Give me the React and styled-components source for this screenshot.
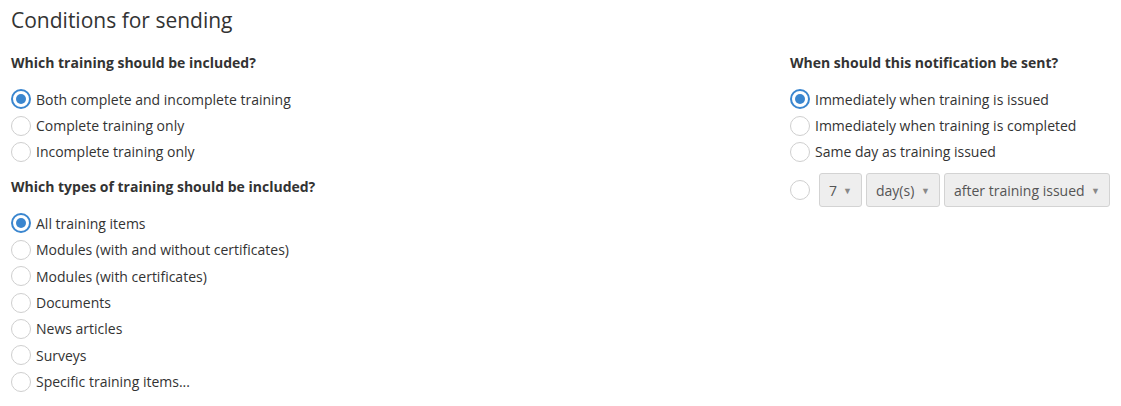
import React, { useState } from "react"
import styled, { createGlobalStyle } from "styled-components"

const GlobalStyle = createGlobalStyle`
  body {
    margin: 0;
    background: #fff;
    font-family: "Open Sans", "Noto Sans", sans-serif;
    color: #333;
  }
`

const Page = styled.div`
  padding: 6px 11px 0 11px;
`

const Title = styled.h2`
  margin: 0 0 19px;
  font-size: 21px;
  font-weight: 400;
  line-height: 28px;
  color: #333;
`

const Columns = styled.div`
  display: grid;
  grid-template-columns: 779px 1fr;
`

const Column = styled.div`
  display: flex;
  flex-direction: column;
`

const Question = styled.h4`
  margin: 0 0 13px;
  font-size: 14px;
  font-weight: 700;
  line-height: 20px;
  color: #333;
`

const Options = styled.div`
  display: flex;
  flex-direction: column;
  margin-bottom: ${(p) => p.$after}px;
`

const Option = styled.label`
  display: flex;
  align-items: center;
  gap: 5px;
  height: 26.4px;
  font-size: 14px;
  color: #333;
  cursor: pointer;
`

const Radio = styled.span`
  box-sizing: border-box;
  width: 20px;
  height: 20px;
  flex: none;
  border-radius: 50%;
  border: ${(p) => (p.$checked ? "2px solid #3a86cf" : "1px solid #cfcfcf")};
  background: #fff;
  display: flex;
  align-items: center;
  justify-content: center;
  cursor: pointer;
  &::after {
    content: "";
    display: ${(p) => (p.$checked ? "block" : "none")};
    width: 10px;
    height: 10px;
    border-radius: 50%;
    background: #3a86cf;
  }
`

const SelectRow = styled.div`
  display: flex;
  align-items: center;
`

const Selects = styled.div`
  display: flex;
  gap: 4px;
  margin-left: 9px;
`

const Select = styled.div`
  box-sizing: border-box;
  height: 34px;
  width: ${(p) => p.$width}px;
  padding: 0 9px;
  display: flex;
  align-items: center;
  justify-content: space-between;
  background: #eeeeee;
  border: 1px solid #d3d3d3;
  border-radius: 3px;
  font-size: 14px;
  color: #555;
`

const Caret = styled.span`
  font-size: 9px;
  color: #888;
`

const RadioGroup = ({ items, value, onChange, after }) => (
  <Options $after={after}>
    {items.map((item, i) => (
      <Option key={item} onClick={() => onChange(i)}>
        <Radio $checked={value === i} />
        {item}
      </Option>
    ))}
  </Options>
)

const App = () => {
  const [included, setIncluded] = useState(0)
  const [types, setTypes] = useState(0)
  const [when, setWhen] = useState(0)

  return (
    <Page>
      <GlobalStyle />
      <Title>Conditions for sending</Title>
      <Columns>
        <Column>
          <Question>Which training should be included?</Question>
          <RadioGroup
            items={[
              "Both complete and incomplete training",
              "Complete training only",
              "Incomplete training only",
            ]}
            value={included}
            onChange={setIncluded}
            after={12}
          />
          <Question>Which types of training should be included?</Question>
          <RadioGroup
            items={[
              "All training items",
              "Modules (with and without certificates)",
              "Modules (with certificates)",
              "Documents",
              "News articles",
              "Surveys",
              "Specific training items...",
            ]}
            value={types}
            onChange={setTypes}
            after={0}
          />
        </Column>
        <Column>
          <Question>When should this notification be sent?</Question>
          <RadioGroup
            items={[
              "Immediately when training is issued",
              "Immediately when training is completed",
              "Same day as training issued",
            ]}
            value={when}
            onChange={setWhen}
            after={8}
          />
          <SelectRow>
            <Radio $checked={when === 3} onClick={() => setWhen(3)} />
            <Selects>
              <Select $width={43}>
                7 <Caret>▼</Caret>
              </Select>
              <Select $width={74}>
                day(s) <Caret>▼</Caret>
              </Select>
              <Select $width={166}>
                after training issued <Caret>▼</Caret>
              </Select>
            </Selects>
          </SelectRow>
        </Column>
      </Columns>
    </Page>
  )
}

export default App
